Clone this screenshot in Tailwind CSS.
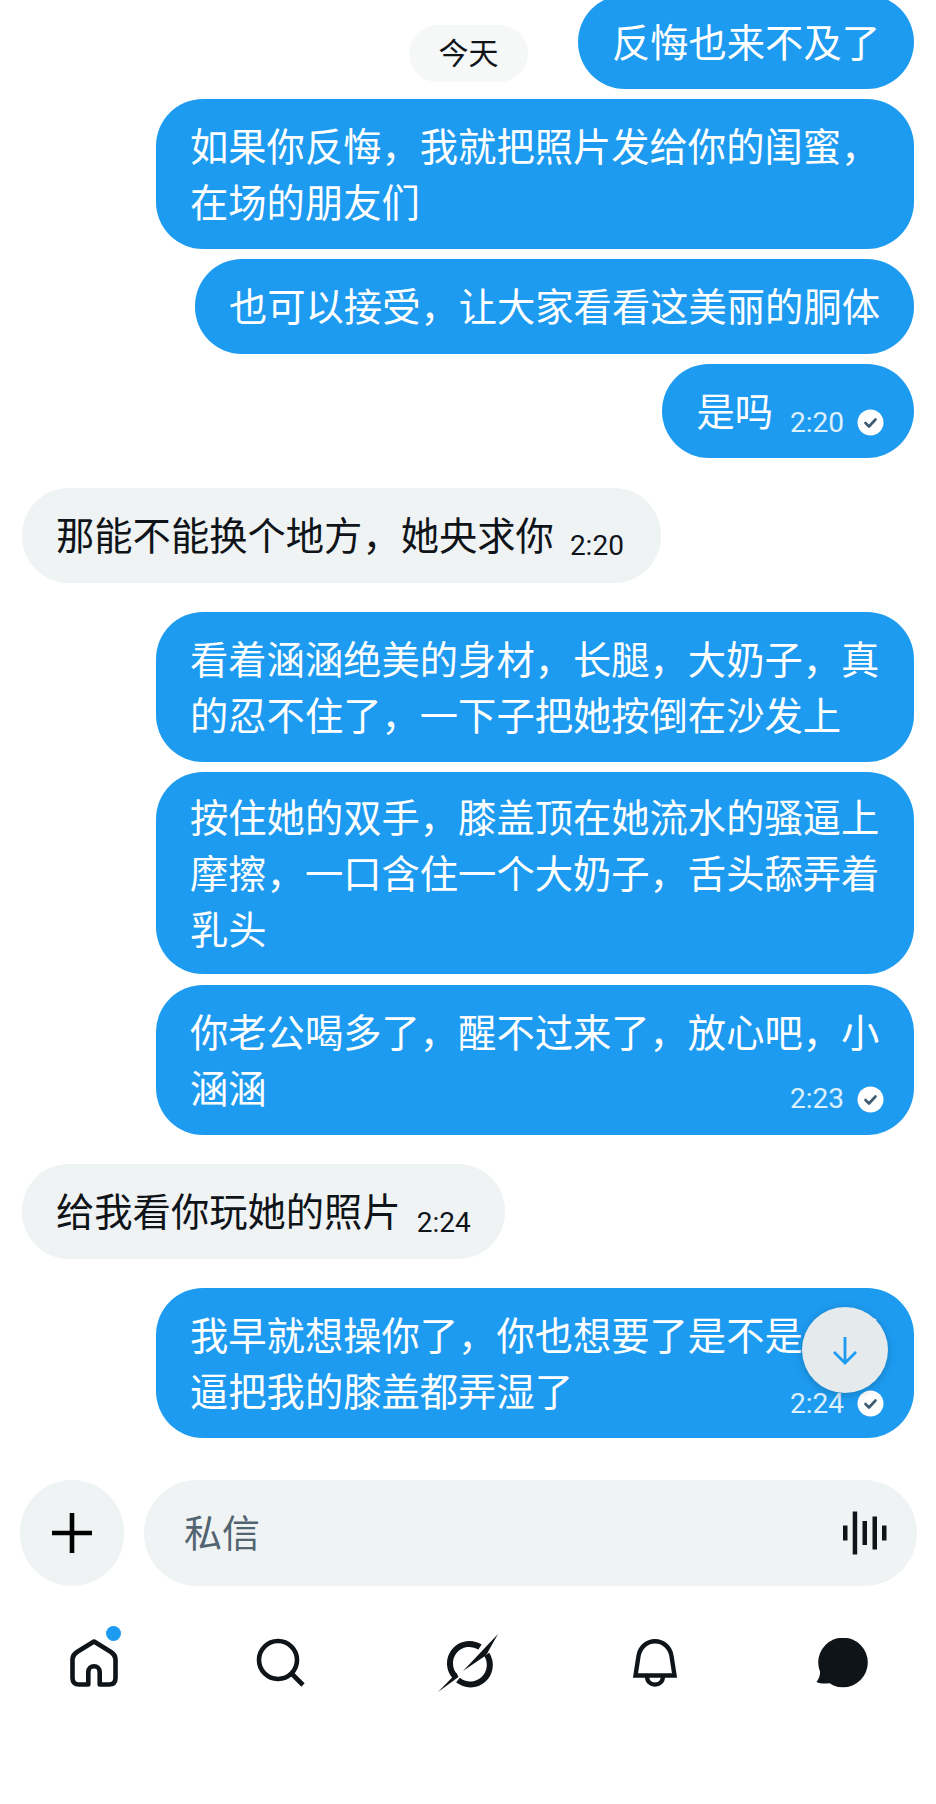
<!DOCTYPE html>
<html lang="zh-CN">
<head>
  <meta charset="UTF-8">
  <title>私信</title>
  <meta name="viewport" content="width=device-width,initial-scale=1">
  <script src="https://cdn.jsdelivr.net/npm/@tailwindcss/browser@4"></script>
</head>
<body class="bg-white">
  <div class="relative w-[936px] h-[1804px] overflow-hidden bg-white text-[#0f1419] font-['Noto_Sans_CJK_SC','Noto_Sans',sans-serif]">

    <!-- messages -->
    <main class="flex flex-col -mt-[5px] px-[22px] text-[38.3px] leading-[56px]">
      <div class="flex flex-col items-end gap-[10px]">
        <div class="rounded-[47px] bg-[#1d9bf0] text-white px-[34px] pt-[18px] pb-[20px]">反悔也来不及了</div>
        <div class="w-[758px] rounded-[47px] bg-[#1d9bf0] text-white px-[34px] pt-[18px] pb-[20px]">如果你反悔，我就把照片发给你的闺蜜，在场的朋友们</div>
        <div class="rounded-[47px] bg-[#1d9bf0] text-white px-[34px] pt-[18px] pb-[21px]">也可以接受，让大家看看这美丽的胴体</div>
        <div class="flex items-center gap-[17px] rounded-[47px] bg-[#1d9bf0] text-white pl-[34px] pr-[30px] pt-[18px] pb-[20px]">
          <span>是吗</span>
          <span class="flex items-center gap-[13px] mt-[25px] text-[28px] leading-none font-['Roboto'] text-white/85">2:20
            <svg class="w-[27px] h-[27px]" viewBox="0 0 27 27"><circle cx="13.5" cy="13.5" r="13" fill="#fff"/><path d="M8.5 14l3.5 3.5 6.5-7" fill="none" stroke="#3c5a70" stroke-width="2.6" stroke-linecap="round" stroke-linejoin="round"/></svg>
          </span>
        </div>
      </div>

      <div class="flex items-start mt-[30px]">
        <div class="flex items-center gap-[16px] rounded-[47px] bg-[#eff3f4] pl-[34px] pr-[37px] pt-[18px] pb-[21px]">
          <span>那能不能换个地方，她央求你</span>
          <span class="mt-[23px] text-[28px] leading-none font-['Roboto']">2:20</span>
        </div>
      </div>

      <div class="flex flex-col items-end gap-[10px] mt-[29px]">
        <div class="w-[758px] rounded-[47px] bg-[#1d9bf0] text-white px-[34px] pt-[18px] pb-[20px]">看着涵涵绝美的身材，长腿，大奶子，真的忍不住了，一下子把她按倒在沙发上</div>
        <div class="w-[758px] rounded-[47px] bg-[#1d9bf0] text-white px-[34px] pt-[16px] pb-[18px]">按住她的双手，膝盖顶在她流水的骚逼上摩擦，一口含住一个大奶子，舌头舔弄着乳头</div>
        <div class="w-[758px] mt-px rounded-[47px] bg-[#1d9bf0] text-white pl-[34px] pr-[30px] pt-[18px] pb-[20px]">
          <div>你老公喝多了，醒不过来了，放心吧，小</div>
          <div class="flex items-center justify-between">
            <span>涵涵</span>
            <span class="flex items-center gap-[13px] mt-[24px] text-[28px] leading-none font-['Roboto'] text-white/85">2:23
              <svg class="w-[27px] h-[27px]" viewBox="0 0 27 27"><circle cx="13.5" cy="13.5" r="13" fill="#fff"/><path d="M8.5 14l3.5 3.5 6.5-7" fill="none" stroke="#3c5a70" stroke-width="2.6" stroke-linecap="round" stroke-linejoin="round"/></svg>
            </span>
          </div>
        </div>
      </div>

      <div class="flex items-start mt-[29px]">
        <div class="flex items-center gap-[16px] rounded-[47px] bg-[#eff3f4] pl-[34px] pr-[34px] pt-[18px] pb-[21px]">
          <span>给我看你玩她的照片</span>
          <span class="mt-[25px] text-[28px] leading-none font-['Roboto']">2:24</span>
        </div>
      </div>

      <div class="flex flex-col items-end mt-[29px]">
        <div class="w-[758px] rounded-[47px] bg-[#1d9bf0] text-white pl-[34px] pr-[30px] pt-[18px] pb-[20px]">
          <div class="whitespace-nowrap">我早就想操你了，你也想要了是不是，骚</div>
          <div class="flex items-center justify-between">
            <span>逼把我的膝盖都弄湿了</span>
            <span class="flex items-center gap-[13px] mt-[27px] text-[28px] leading-none font-['Roboto'] text-white/85">2:24
              <svg class="w-[27px] h-[27px]" viewBox="0 0 27 27"><circle cx="13.5" cy="13.5" r="13" fill="#fff"/><path d="M8.5 14l3.5 3.5 6.5-7" fill="none" stroke="#3c5a70" stroke-width="2.6" stroke-linecap="round" stroke-linejoin="round"/></svg>
            </span>
          </div>
        </div>
      </div>
    </main>

    <!-- date pill, sticks over the list -->
    <div class="absolute left-[409px] top-[25px] flex items-center justify-center w-[119px] h-[57px] pb-[4px] rounded-full bg-[#f6f7f7] text-[30px] text-[#0f1419]">今天</div>

    <!-- scroll to bottom -->
    <button class="absolute left-[802px] top-[1307px] flex items-center justify-center w-[86px] h-[86px] rounded-full bg-[#e5eaec] shadow-[0_2px_8px_rgba(0,0,0,0.2)]">
      <svg class="w-[30px] h-[30px]" viewBox="0 0 30 30" fill="none" stroke="#1d9bf0" stroke-width="2.8"><path d="M15 2v25M4 17l11 11 11-11"/></svg>
    </button>

    <!-- composer -->
    <div class="flex gap-[20px] mt-[42px] pl-[20px] pr-[19px]">
      <div class="flex items-center justify-center w-[104px] h-[106px] rounded-full bg-[#eff3f4]">
        <svg class="w-[40px] h-[40px]" viewBox="0 0 40 40" fill="none" stroke="#000" stroke-width="4.6"><path d="M20 0v40M0 20h40"/></svg>
      </div>
      <div class="flex-1 flex items-center justify-between h-[106px] rounded-full bg-[#eff3f4] pl-[40px] pr-[30px]">
        <span class="pb-[6px] text-[38px] text-[#536471]">私信</span>
        <svg class="w-[44px] h-[44px]" viewBox="0 0 44 44" fill="#0f1419">
          <rect x="0" y="14.5" width="4.5" height="15"/>
          <rect x="9.7" y="0.5" width="4.5" height="43"/>
          <rect x="19.5" y="10" width="4.5" height="24"/>
          <rect x="29.5" y="5.5" width="4.5" height="33"/>
          <rect x="39" y="14.5" width="4.5" height="15"/>
        </svg>
      </div>
    </div>

    <!-- tab bar -->
    <nav class="grid grid-cols-5 mt-[47px] h-[60px]">
      <div class="flex items-center justify-center">
        <div class="relative">
          <svg class="w-[48px] h-[48px]" viewBox="0 0 48 48" fill="none" stroke="#0f1419" stroke-width="4.6" stroke-linejoin="round">
            <path d="M24 2.5 L41 13 Q45.5 16 45.5 20 V39 Q45.5 45.5 39 45.5 H29.7 V33 A5.7 5.7 0 0 0 18.3 33 V45.5 H9 Q2.5 45.5 2.5 39 V20 Q2.5 16 7 13 Z"/>
          </svg>
          <span class="absolute -right-[3px] -top-[13px] w-[15px] h-[15px] rounded-full bg-[#1d9bf0]"></span>
        </div>
      </div>
      <div class="flex items-center justify-center">
        <svg class="w-[50px] h-[50px]" viewBox="0 0 50 50" fill="none" stroke="#0f1419" stroke-width="4.6">
          <circle cx="22" cy="22" r="19"/><path d="M35.5 35.5L47 47"/>
        </svg>
      </div>
      <div class="flex items-center justify-center">
        <svg class="w-[60px] h-[60px]" viewBox="0 0 60 60" fill="none">
          <path d="M42 14A19.5 19.5 0 0 0 17.2 43.7" stroke="#0f1419" stroke-width="6"/>
          <path d="M20 47A19.5 19.5 0 0 0 48.7 21.3" stroke="#0f1419" stroke-width="6"/>
          <path d="M60 1L25 38L47 23Q50 20 51 17Z" fill="#0f1419"/>
          <path d="M0 59L18.5 40L20.5 44Z" fill="#0f1419"/>
        </svg>
      </div>
      <div class="flex items-center justify-center">
        <svg class="w-[44px] h-[48px]" viewBox="0 0 44 48" fill="none" stroke="#0f1419" stroke-width="4.4" stroke-linejoin="miter">
          <path d="M2.5 36.5H41.5L38.5 17C37 8 30 2.2 22 2.2C14 2.2 7 8 5.5 17Z"/>
          <path d="M14 37C14 48.5 30 48.5 30 37"/>
        </svg>
      </div>
      <div class="flex items-center justify-center">
        <svg class="w-[52px] h-[50px]" viewBox="0 0 52 50" fill="#0f1419">
          <circle cx="27" cy="24.5" r="24.8"/>
          <path d="M4 28C5 36 3 41 0.5 44C6 46.5 13 46 20 43Z"/>
        </svg>
      </div>
    </nav>
  </div>
</body>
</html>
